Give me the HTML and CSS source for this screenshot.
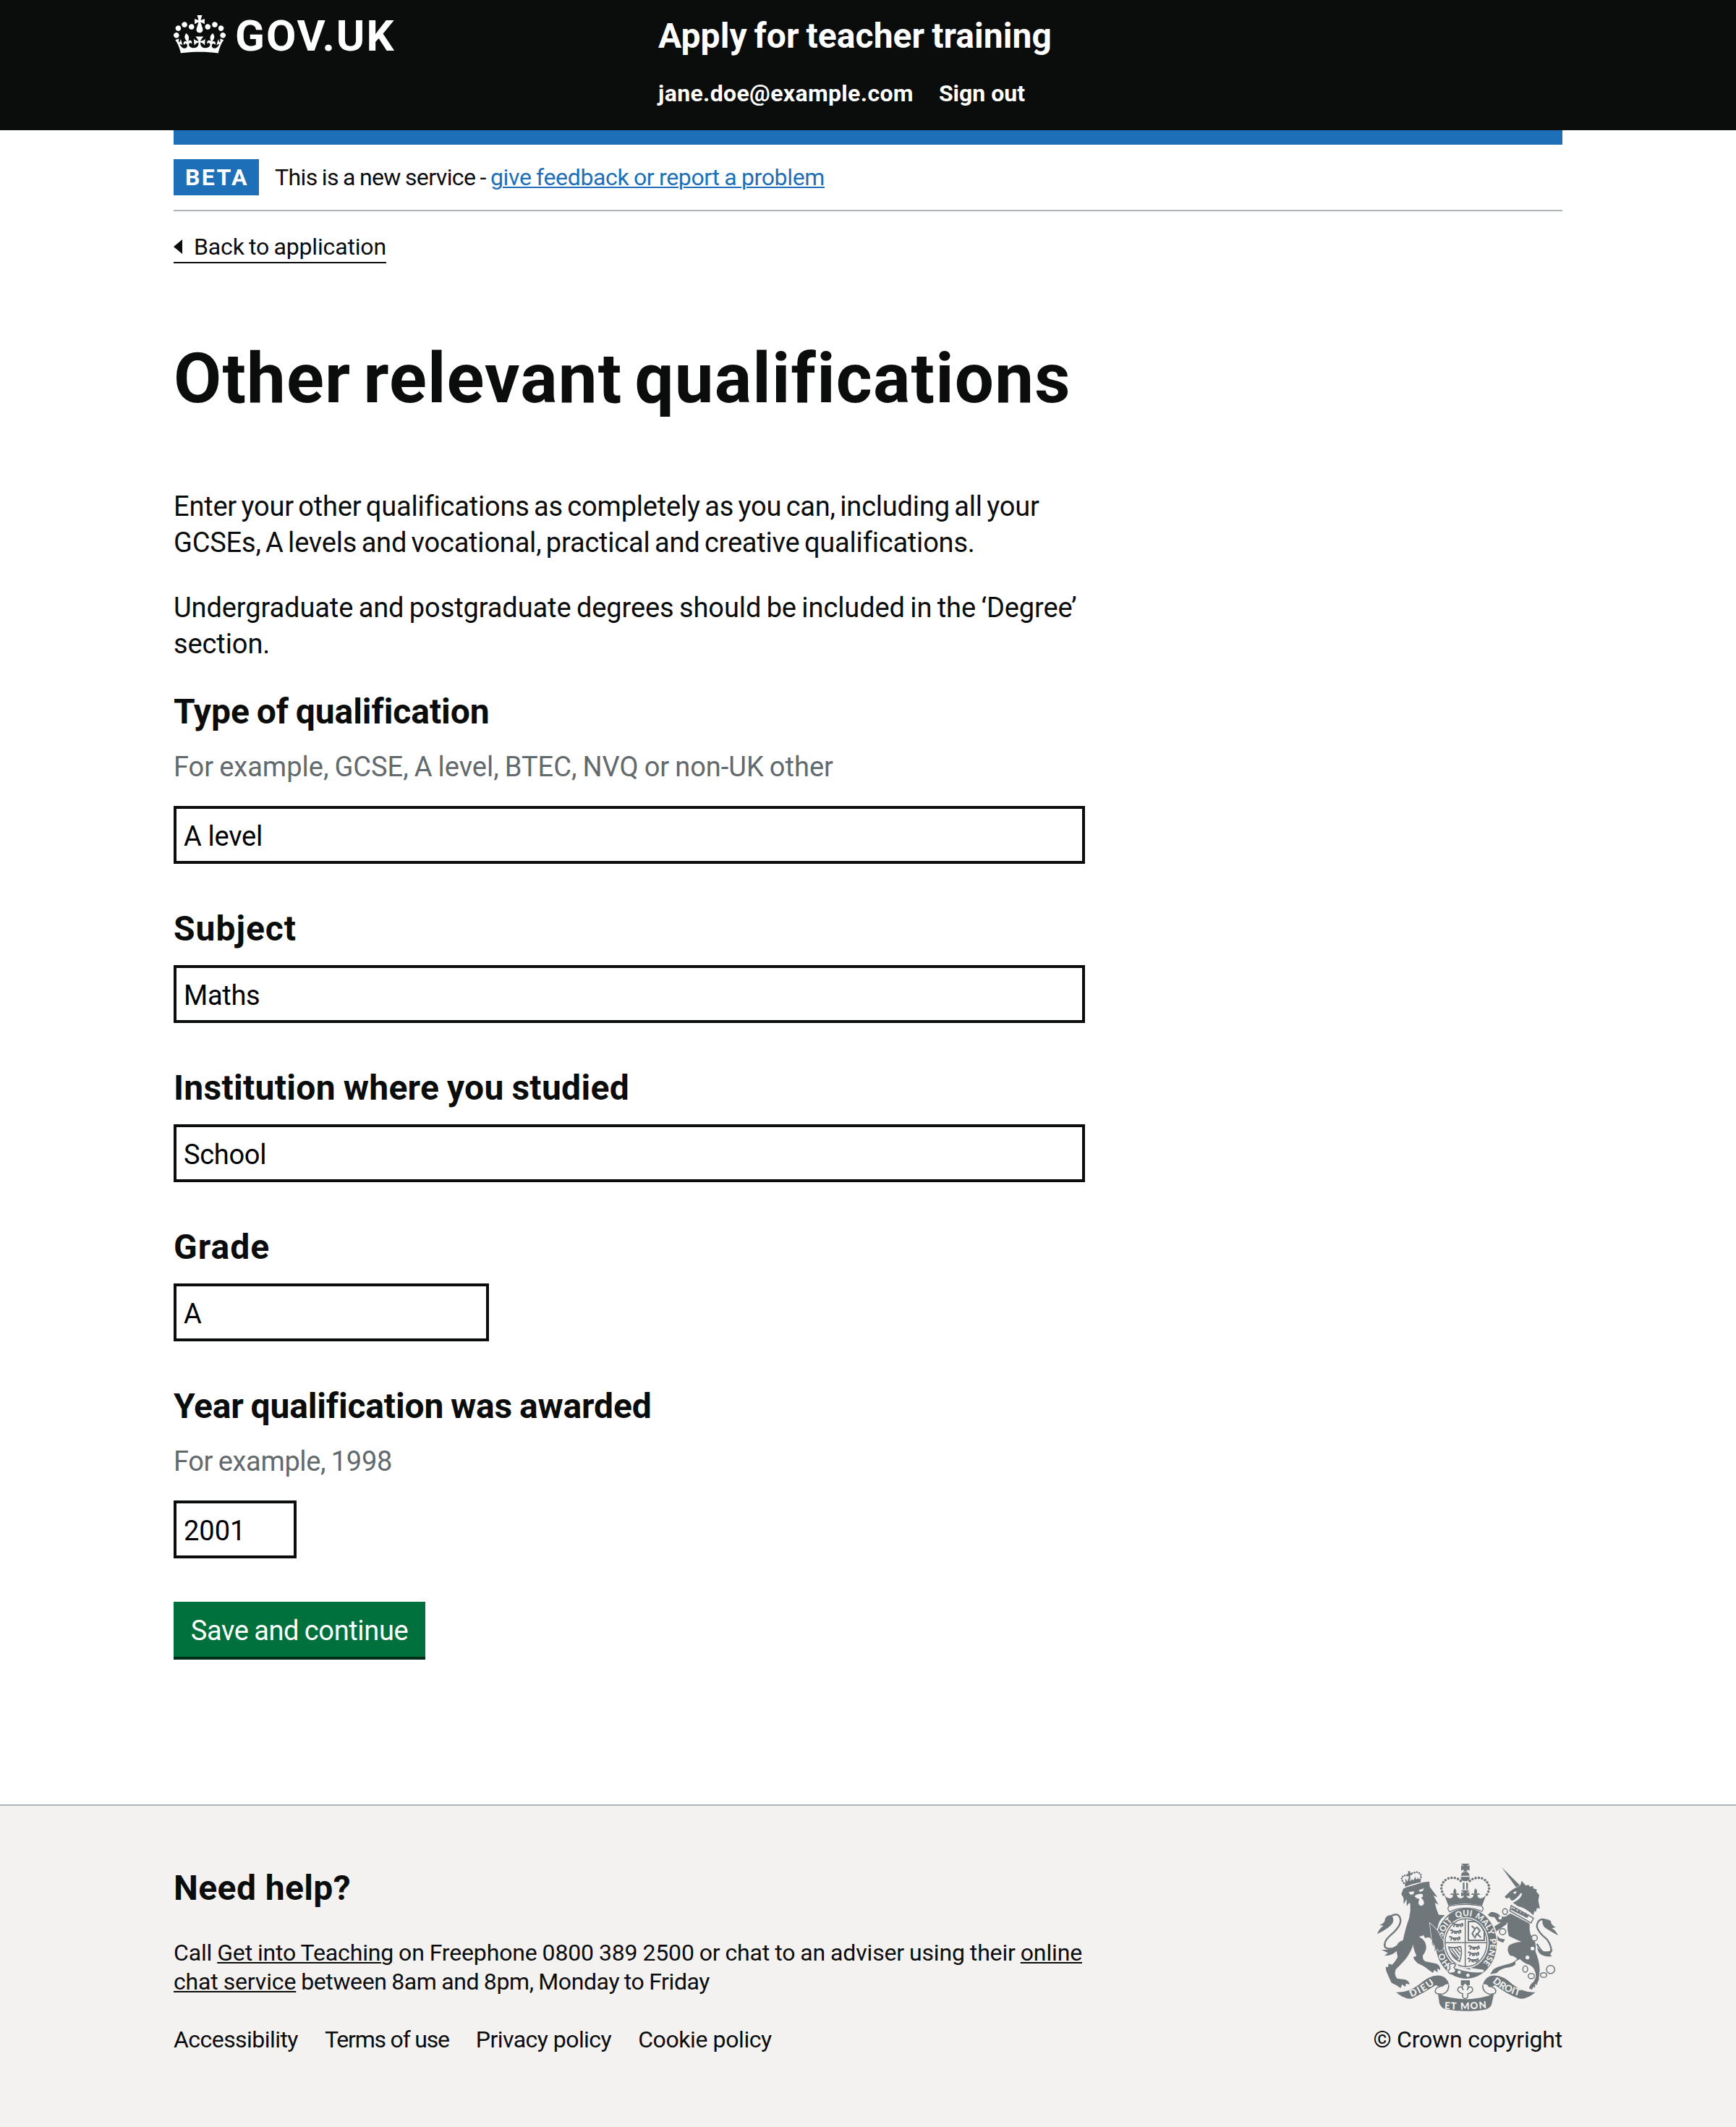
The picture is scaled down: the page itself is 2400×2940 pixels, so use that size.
FILE: index.html
```html
<!DOCTYPE html>
<html lang="en">
<head>
<meta charset="utf-8">
<title>Other relevant qualifications - Apply for teacher training</title>
<link rel="stylesheet" href="styles.css">
</head>
<body>
<header class="header">
  <div class="container header-inner">
    <a class="logo" href="#">
      <svg class="logo-crown" viewBox="0 0 132 97" aria-hidden="true"><path fill="currentColor" fill-rule="evenodd" d="M25 30.2c3.5 1.5 7.7-.2 9.1-3.7 1.5-3.6-.2-7.8-3.9-9.2-3.6-1.4-7.6.3-9.1 3.9-1.4 3.5.3 7.5 3.9 9zM9 39.5c3.6 1.5 7.8-.2 9.2-3.7 1.5-3.6-.2-7.8-3.9-9.1-3.6-1.5-7.6.2-9.1 3.8-1.4 3.5.3 7.5 3.8 9zM4.4 57.2c3.5 1.5 7.7-.2 9.1-3.8 1.5-3.6-.2-7.7-3.9-9.1-3.5-1.5-7.6.3-9.1 3.8-1.4 3.5.3 7.6 3.9 9.1zm38.3-21.4c3.5 1.5 7.7-.2 9.1-3.8 1.5-3.6-.2-7.7-3.9-9.1-3.6-1.5-7.6.3-9.1 3.8-1.3 3.6.4 7.7 3.9 9.1zm64.4-5.6c-3.6 1.5-7.8-.2-9.1-3.7-1.5-3.6.2-7.8 3.8-9.2 3.6-1.4 7.7.3 9.2 3.9 1.3 3.5-.4 7.5-3.9 9zm15.9 9.3c-3.6 1.5-7.7-.2-9.1-3.7-1.5-3.6.2-7.8 3.7-9.1 3.6-1.5 7.7.2 9.2 3.8 1.5 3.5-.3 7.5-3.8 9zm4.7 17.7c-3.6 1.5-7.8-.2-9.2-3.8-1.5-3.6.2-7.7 3.9-9.1 3.6-1.5 7.7.3 9.2 3.8 1.3 3.5-.4 7.6-3.9 9.1zM89.3 35.8c-3.6 1.5-7.8-.2-9.2-3.8-1.4-3.6.2-7.7 3.9-9.1 3.6-1.5 7.7.3 9.2 3.8 1.4 3.6-.3 7.7-3.9 9.1zM69.7 17.7l8.9 4.7V9.3l-8.9 2.8c-.2-.3-.5-.6-.9-.9L72.4 0H59.6l3.5 11.2c-.3.3-.6.5-.9.9l-8.8-2.8v13.1l8.8-4.7c.3.3.6.7.9.9l-5 15.4v.1c-.2.8-.4 1.6-.4 2.4 0 4.1 3.1 7.5 7 8.1h.2c.3 0 .7.1 1 .1.4 0 .7 0 1-.1h.2c4-.6 7.1-4.1 7.1-8.1 0-.8-.1-1.7-.4-2.4V34l-5.1-15.4c.4-.2.7-.6 1-.9zM66 92.8c16.9 0 32.8 1.1 47.1 3.2 4-16.9 8.9-26.7 14-33.5l-9.6-3.4c1 4.9 1.1 7.2 0 10.2-1.5-1.4-3-4.3-4.2-8.7L108.6 76c2.8-2 5-3.2 7.5-3.3-4.4 9.4-10 11.9-13.6 11.2-4.3-.8-6.3-4.6-5.6-7.9 1-4.7 5.7-5.9 8-.5 4.3-8.7-3-11.4-7.6-8.8 7.1-7.2 7.9-13.5 2.1-21.1-8 6.1-8.1 12.3-4.5 20.8-4.7-5.4-12.1-2.5-9.5 6.2 3.4-5.2 7.9-2 7.2 3.1-.6 4.3-6.4 7.8-13.5 7.2-10.3-.9-10.9-8-11.2-13.8 2.5-.5 7.1 1.8 11 7.3L80.2 60c-4.1 4.4-8 5.3-12.3 5.4 1.4-4.4 8-11.6 8-11.6H55.5s6.4 7.2 7.9 11.6c-4.2-.1-8-1-12.3-5.4l1.4 16.4c3.9-5.5 8.5-7.7 10.9-7.3-.3 5.8-.9 12.8-11.1 13.8-7.2.6-12.9-2.9-13.5-7.2-.7-5 3.8-8.3 7.1-3.1 2.7-8.7-4.6-11.6-9.4-6.2 3.7-8.5 3.6-14.7-4.6-20.8-5.8 7.6-5 13.9 2.2 21.1-4.7-2.6-11.9.1-7.7 8.8 2.3-5.5 7.1-4.2 8.1.5.7 3.3-1.3 7.1-5.7 7.9-3.5.7-9-1.8-13.5-11.2 2.5.1 4.7 1.3 7.5 3.3l-4.7-15.4c-1.2 4.4-2.7 7.2-4.3 8.7-1.1-3-.9-5.3 0-10.2l-9.5 3.4c5 6.9 9.9 16.7 14 33.5 14.8-2.1 30.8-3.2 47.7-3.2z"/></svg>
      <span class="logo-text">GOV.UK</span>
    </a>
    <div class="header-content">
      <a class="service-name" href="#">Apply for teacher training</a>
      <nav class="header-nav">
        <a class="header-user" href="#">jane.doe@example.com</a>
        <a href="#">Sign out</a>
      </nav>
    </div>
  </div>
</header>

<div class="container">
  <div class="phase-banner">
    <strong class="phase-tag">BETA</strong>
    <p class="phase-text">This is a new service - <a class="link" href="#">give feedback or report a problem</a></p>
  </div>
  <a class="back-link" href="#">
    <svg class="back-arrow" viewBox="0 0 12 20" aria-hidden="true"><path d="M12 0v20L0 10z"/></svg>
    Back to application
  </a>

  <main class="main">
    <h1 class="title">Other relevant qualifications</h1>
    <p class="body-text">Enter your other qualifications as completely as you can, including all your<br>GCSEs, A levels and vocational, practical and creative qualifications.</p>
    <p class="body-text body-text--degrees">Undergraduate and postgraduate degrees should be included in the ‘Degree’<br>section.</p>

    <form>
      <div class="field">
        <label class="label label--type" for="type">Type of qualification</label>
        <span class="hint">For example, GCSE, A level, BTEC, NVQ or non-UK other</span>
        <input class="input" id="type" type="text" value="A level">
      </div>
      <div class="field">
        <label class="label label--short" for="subject">Subject</label>
        <input class="input" id="subject" type="text" value="Maths">
      </div>
      <div class="field">
        <label class="label label--wide" for="institution">Institution where you studied</label>
        <input class="input" id="institution" type="text" value="School">
      </div>
      <div class="field">
        <label class="label label--short" for="grade">Grade</label>
        <input class="input input--10" id="grade" type="text" value="A">
      </div>
      <div class="field">
        <label class="label label--tight" for="year">Year qualification was awarded</label>
        <span class="hint hint--tight">For example, 1998</span>
        <input class="input input--4" id="year" type="text" value="2001">
      </div>
      <button class="button" type="button">Save and continue</button>
    </form>
  </main>
</div>

<footer class="footer">
  <div class="container footer-inner">
    <div class="footer-main">
      <h2 class="footer-title">Need help?</h2>
      <p class="footer-text">Call <a href="#">Get into Teaching</a> on Freephone 0800 389 2500 or chat to an adviser using their <a href="#">online<br>chat service</a> <span class="footer-hours">between 8am and 8pm, Monday to Friday</span></p>
      <ul class="footer-links">
        <li><a href="#">Accessibility</a></li>
        <li class="terms"><a href="#">Terms of use</a></li>
        <li><a href="#">Privacy policy</a></li>
        <li class="cookies"><a href="#">Cookie policy</a></li>
      </ul>
    </div>
    <div class="footer-meta">
      <svg class="crest" viewBox="72 78 750 612" role="img" aria-label="Royal coat of arms">
        <defs>
          <path id="motto" d="M441 523A99 114 0 0 1 441 295A99 114 0 0 1 441 523"/>
          <path id="scroll-left" d="M212 631Q268 612 322 567"/>
          <path id="scroll-right" d="M549 570Q600 612 672 630"/>
          <path id="scroll-mid" d="M350 680Q437 687 532 676"/>
          <g id="passant" fill="none" stroke-width="6"><path d="M0 4h9l5 5h22l9-6M12 9l-6 9M20 10v9M33 10l6 9M28 10l-3 9M44 4v12M4 0v7"/></g>
        </defs>

        <!-- lion -->
        <path class="ink" d="M172 205l8-23 10-5 72-22 26-3 2 22 32 43-17-7 21 38-15-8 6 24 10 26 26 2Q312 325 330 362l15 38-5 30-18 12-4-9-8 8-2-20-9-9-1-17-10-12-18 3-5-11-20 6q27 14 30 39 2 20-14 38-2 16 10 25l46 10q18 8 16 26l-12-6 2 16-14-10-6 12-14-10q-27-22-49-30-17-14-18-26l13-4q-14-32-14-48-6 26-32 62-25 27-40 42-8 20 5 37l35 5q16 6 17 20l-15-4-2 14-14-10-6 15-18-12-20-10q-14-30-22-50l-2-16 10 1 2-14 15 4q13-12 23-32-8-30-3-50 6-14 25-20 10-50 25-90 8-30 5-60l-4-5-11 14v-30l-12 22-1-26z"/>
        <path class="paper" d="M202 196l24-3-4 12-12 2zM244 188l22-8-5 11-12 4zM226 213q14-12 34-9l2 10-8 6q12 10 12 22-4 11-13 10-11-2-10-14l4-14-10-2z"/>
        <path class="ink" d="M189 174l-4-14q30-14 66-18l2 13q-36 5-64 19z"/>
        <path class="beads beads--small" d="M182 158Q162 132 190 126L204 128M250 144Q262 120 236 113L216 118"/>
        <path class="ink" d="M200 108l10 3-2 7 7-1 1 9-8-1 2 18-6 1-3-17-7 3-1-8 7-2zM190 160l-2-22 9 14 5-14 6 12 9-8 4 8 9-18 4 13 9-10 1 14-28 8z"/>
        <path class="rope" d="M126 297Q160 276 168 308Q174 334 128 374Q96 402 104 424Q118 438 156 424"/>
        <path class="ink" d="M72 370q8-24 26-34l-16-4q24-8 22-24 8-18 26-16 14 14 6 32-14 22-64 46zM88 434q30 6 66-18l6 14q-18 30-58 30l14-12z"/>

        <!-- unicorn -->
        <path class="ink" d="M588 93l76 75-17 7zM600 215l20-19q18-16 45-27l6-20 17 20 12-3 4 7 14-2 2 10 14 4-2 9 12 14-4 24 7 32-12-2-6 18-4-8-6 20q-28-30-64-38l-20-14q34-14 38-38l-6-2q-16 24-36 32l-12-10-10 2-9-10z"/>
        <path class="paper" d="M636 196l14-3-3 9-7 1zM608 222l16-4-4 7-8 3z"/>
        <path class="thin" d="M628 252l92 52-10 20-88-50z"/>
        <path class="ink" d="M634 260l6 8 5-6 8 14 6-8 8 14 6-8 7 14 8-8 4 12 10-4-8 16-70-36z"/>
        <path class="ink" d="M624 284l80 42q-2 26 4 46 28 30 20 70 16 36 18 76l-4 42q-6 10-8 22l-6-6-2 18-6-6-6 12-12-4q4-20 20-30l8-20q0-34-26-48-22-6-40-24-14 4-20 12 10 18-40 24-28 8-36 22l-28 4 14-20q20-12 46-18 40-8 52-24-10-14-28-14-18-22-6-42 18-14 52-16-20-8-52-24-8-24-6-48z"/>
        <path class="ink" d="M624 284l-8 40-44-4-14-20-18-2-10-8 14-12q28 0 40 20h20zM610 328l-34 24q-16 6-10 20l14 16 22 4-8 14-28-12-22-26-1-20 56-36z"/>
        <g class="paper"><circle cx="716" cy="430" r="8"/><circle cx="695" cy="467" r="8"/><circle cx="582" cy="303" r="7"/></g>
        <g class="thin"><ellipse cx="602" cy="277" rx="10" ry="12"/><circle class="paper" cx="592" cy="360" r="13"/><circle class="paper" cx="724" cy="386" r="12"/><ellipse cx="686" cy="515" rx="10" ry="13"/><ellipse cx="711" cy="544" rx="13" ry="11"/><ellipse cx="762" cy="540" rx="13" ry="10"/><circle cx="791" cy="517" r="17"/></g>
        <path class="rope" d="M772 312Q738 300 734 338Q738 362 776 392Q806 436 784 452Q758 456 734 410"/>
        <path class="ink" d="M822 376q-8-20-26-30l16-4q-20-10-20-26-12-12-34-6-4 18 8 32 20 14 56 34zM735 424q14 24 52 16l14-4-12 18 8 8q-26 4-44-6-16-10-18-32z"/>

        <!-- garter and shield -->
        <ellipse class="paper" cx="441" cy="409" rx="132" ry="151"/>
        <ellipse class="ink" cx="441" cy="409" rx="127" ry="146"/>
        <ellipse class="paper" cx="440" cy="406" rx="94" ry="106"/>
        <ellipse class="thin" cx="440" cy="406" rx="87" ry="99"/>
        <path class="thin" d="M437 306v202M352 406h176"/>
        <g class="detail">
          <use href="#passant" x="382" y="322"/><use href="#passant" x="374" y="350"/><use href="#passant" x="370" y="378"/>
          <use href="#passant" x="450" y="416"/><use href="#passant" x="448" y="442"/><use href="#passant" x="446" y="468"/>
          <path d="M450 318v78h66v-36q-14-34-38-42zM464 336l12 12 10-6 12 14-10 14 14 14M478 348l-12 20 8 14M486 366l-10 22" fill="none" stroke-width="6"/>
          <path d="M368 424q22 6 50-2 8 22-4 62-32-12-46-60zM380 432l30 40M392 430l22 28M376 444l30 32M404 428l12 16" fill="none" stroke-width="5"/>
        </g>
        <g class="motto">
          <text><textPath href="#motto" startOffset="74">HO</textPath></text>
          <text><textPath href="#motto" startOffset="194">SOIT</textPath></text>
          <text><textPath href="#motto" startOffset="292">QUI</textPath></text>
          <text><textPath href="#motto" startOffset="370">MAL</textPath></text>
          <text><textPath href="#motto" startOffset="445">Y</textPath></text>
          <text><textPath href="#motto" startOffset="482">PENSE</textPath></text>
        </g>
        <path class="paper" d="M362 500l18-12 26 6 2 12 52 12-6-8 60 8-2 10q-60 40-122 0l-28 4z"/>
        <path class="ink" d="M398 512q60 22 112 16-44 40-122 12z"/>
        <path class="thin" d="M372 498q14-12 26 0l-8 10 10 14-12 14q-22 0-22-14l8-8z"/>
        <g class="paper"><circle cx="412" cy="528" r="7"/><circle cx="448" cy="541" r="7"/></g>
        <!-- lion's raised paw, resting on the garter -->
        <path class="paw" d="M290 325q36 30 42 52l14 22 2 24-6 14-14 4-6-10-8 8-4-22-10-12z"/>

        <!-- crown -->
        <path class="ink" d="M420 78h35l-12 11 12-4v22l-12-6 4 9h-19l5-9-13 6V85l12 4zM419 128q2-16 18-16t18 16zM418 133h38q0 18-19 18t-19-18zM427 157h7v28h-7zM441 157h7v28h-7z"/>
        <path class="beads" d="M418 149Q396 130 364 140Q322 166 348 208M456 149Q480 130 510 140Q552 166 526 208"/>
        <path class="ink" d="M350 206q8 14 24 16 14-4 12-14l-12-2 8-6 8 4q-6-12 4-24 10 12 4 24l8-4 8 6-12 2q2 12 16 14 12-2 14-12l-12 4v-18l12 6-12-14h34l-12 14 12-6v18l-12-4q2 10 14 12 14-2 16-14l-12-2 8-6 8 4q-6-12 4-24 10 12 4 24l8-4 8 6-12 2q-2 10 12 14 16-2 24-16l-17 46q-70-16-140 0z"/>
        <path class="band" d="M370 254q67-14 136 0 10 10 0 22-28-14-66-14t-68 16q-12-14-2-24z"/>

        <!-- pendant -->
        <path class="ink" d="M419 562h37v20h-8l-11-14-10 14h-8z"/>
        <path class="thin paper" d="M437 572q20 16 8 30 6-20 20-10 10 14-12 24l-6 2q4 18-10 20-14-2-10-20l-6-2q-22-10-12-24 14-10 20 10-12-14 8-30z"/>

        <!-- ribbons -->
        <path class="ink" d="M150 611q48 4 96-32 50-44 90-36 26 6 34 36-10-4-24 6-24 6-30-4-50 32-98 56-30 6-68-26zM728 611q-48 4-94-32-46-44-90-36-24 6-34 36 10-4 24 6 20 6 26-4 50 38 100 56 30 6 68-26zM324 618q112 44 232 0l-10 46q-8 16-30 20-80 12-160-2-18-4-26-24z"/>
        <path class="thin" d="M346 584q-34 4-34 24 4 12 24 10M332 622q40-8 36-42M532 586q32 4 32 22-4 12-20 10M548 622q-42-8-38-42"/>
        <g class="motto motto--scroll">
          <text textLength="112"><textPath href="#scroll-left">DIEU</textPath></text>
          <text textLength="126"><textPath href="#scroll-right">DROIT</textPath></text>
          <text textLength="176"><textPath href="#scroll-mid">ET MON</textPath></text>
        </g>
      </svg>
      <a class="copyright" href="#">© Crown copyright</a>
    </div>
  </div>
</footer>
</body>
</html>
```
FILE: styles.css
```css
*, *::before, *::after { box-sizing: border-box; }

body {
  margin: 0;
  background: #fff;
  color: #0b0c0c;
  font-family: Roboto, "Liberation Sans", sans-serif;
  font-size: 38px;
  line-height: 50px;
}

h1, h2, p, ul { margin: 0; padding: 0; }
a { color: inherit; text-decoration: none; }

.container { width: 1920px; margin: 0 auto; }

/* Header */
.header { height: 180px; background: #0b0c0c; color: #fff; font-weight: 700; }
.header-inner {
  display: grid;
  grid-template-columns: 670px 1fr;
  height: 200px;
  border-bottom: 20px solid #1d70b8;
}
.logo { display: flex; gap: 13px; align-items: flex-start; padding-top: 20px; }
.logo-crown { width: 72px; height: 53px; margin-top: 1px; }
.logo-text { font-size: 60px; line-height: 60px; letter-spacing: 2px; }
.header-content { padding-top: 20px; }
.service-name { display: block; font-size: 48px; line-height: 60px; letter-spacing: .05px; word-spacing: -2px; }
.header-nav { display: flex; gap: 35px; margin-top: 29px; font-size: 32px; line-height: 40px; }
.header-user { letter-spacing: .35px; }

/* Phase banner */
.phase-banner {
  display: flex;
  align-items: center;
  gap: 22px;
  margin-top: 20px;
  padding: 20px 0;
  border-bottom: 2px solid #b1b4b6;
  font-size: 32px;
  line-height: 40px;
}
.phase-tag {
  padding: 5px 14px 5px 16px;
  background: #1d70b8;
  color: #fff;
  letter-spacing: 2.4px;
}
.phase-text { letter-spacing: -.6px; word-spacing: -1.2px; }
.link {
  color: #1d70b8;
  letter-spacing: -.35px;
  word-spacing: -1px;
  text-decoration: underline;
  text-decoration-thickness: 2px;
  text-underline-offset: 2px;
}

.back-link {
  display: inline-flex;
  align-items: center;
  gap: 16px;
  margin-top: 29px;
  padding-bottom: 1px;
  border-bottom: 2px solid #0b0c0c;
  font-size: 32px;
  line-height: 40px;
  letter-spacing: -.15px;
  word-spacing: -1.5px;
  vertical-align: top;
}
.back-arrow { width: 12px; height: 20px; fill: #0b0c0c; }

/* Main content */
.main { width: 1260px; padding: 109px 0 204px; }
.title { margin-bottom: 102px; font-size: 96px; line-height: 100px; letter-spacing: 1.2px; word-spacing: -8px; }
.body-text { margin-bottom: 40px; white-space: nowrap; letter-spacing: -.2px; word-spacing: -2.8px; }
.body-text--degrees { margin-bottom: 39px; letter-spacing: -.1px; word-spacing: -1.9px; }

.field { display: flex; flex-direction: column; margin-bottom: 60px; }
.label { font-size: 48px; font-weight: 700; line-height: 60px; margin-bottom: 20px; }
.label--type { letter-spacing: -.05px; word-spacing: -2px; }
.label--short { letter-spacing: 1px; }
.label--wide { letter-spacing: .3px; word-spacing: -1.5px; }
.label--tight { letter-spacing: -.15px; word-spacing: -2px; }
.hint { margin: 1px 0 29px; color: #626a6e; word-spacing: -1.4px; }
.hint--tight { letter-spacing: -.35px; }
.input {
  width: 100%;
  height: 80px;
  padding: 4px 10px 0;
  border: 4px solid #0b0c0c;
  border-radius: 0;
  background: #fff;
  color: #000;
  font: inherit;
  letter-spacing: -.3px;
}
.input--10 { width: 436px; }
.input--4 { width: 170px; letter-spacing: 0; }

.button {
  display: block;
  width: 348px;
  height: 76px;
  padding: 3px 0 0;
  border: 0;
  background: #00703c;
  box-shadow: 0 4px 0 #002d18;
  color: #fff;
  font: inherit;
  letter-spacing: -.35px;
  word-spacing: -1.5px;
}

/* Footer */
.footer { height: 446px; border-top: 2px solid #b1b4b6; background: #f3f2f1; font-size: 32px; line-height: 40px; }
.footer-inner { display: flex; justify-content: space-between; }
.footer-main { width: 1260px; padding-top: 84px; }
.footer-title { font-size: 48px; line-height: 60px; letter-spacing: .4px; }
.footer-text { margin: 39px 0 40px; white-space: nowrap; letter-spacing: -.15px; word-spacing: -.8px; }
.footer-text a { text-decoration: underline; text-decoration-thickness: 2px; text-underline-offset: 2px; }
.footer-hours { letter-spacing: -.4px; }
.footer-links { display: flex; gap: 37px; list-style: none; letter-spacing: -.55px; }
.terms { letter-spacing: -1.2px; }
.cookies { letter-spacing: -.4px; }
.footer-meta { display: flex; flex-direction: column; align-items: flex-end; padding-top: 80px; }
.crest { width: 250px; height: 204px; margin: 0 6px 19px 0; }
.copyright { letter-spacing: -.2px; }

/* Coat of arms */
.crest .ink { fill: #6f777b; }
.crest .paper { fill: #f3f2f1; }
.crest .paw { fill: #6f777b; stroke: #f3f2f1; stroke-width: 4; paint-order: stroke; }
.crest .thin { fill: none; stroke: #6f777b; stroke-width: 4.5; }
.crest .thin .paper, .crest .thin.paper { fill: #f3f2f1; }
.crest .rope { fill: none; stroke: #6f777b; stroke-width: 7; }
.crest .band { fill: #f3f2f1; stroke: #6f777b; stroke-width: 4; }
.crest .detail { stroke: #6f777b; }
.crest .beads { fill: none; stroke: #6f777b; stroke-width: 11; stroke-linecap: round; stroke-dasharray: 0 13.5; }
.crest .beads--small { stroke-width: 8; stroke-dasharray: 0 10; }
.crest .motto { fill: #f3f2f1; font: 900 35px Lato, sans-serif; }
.crest .motto--scroll { font-size: 40px; }
```
